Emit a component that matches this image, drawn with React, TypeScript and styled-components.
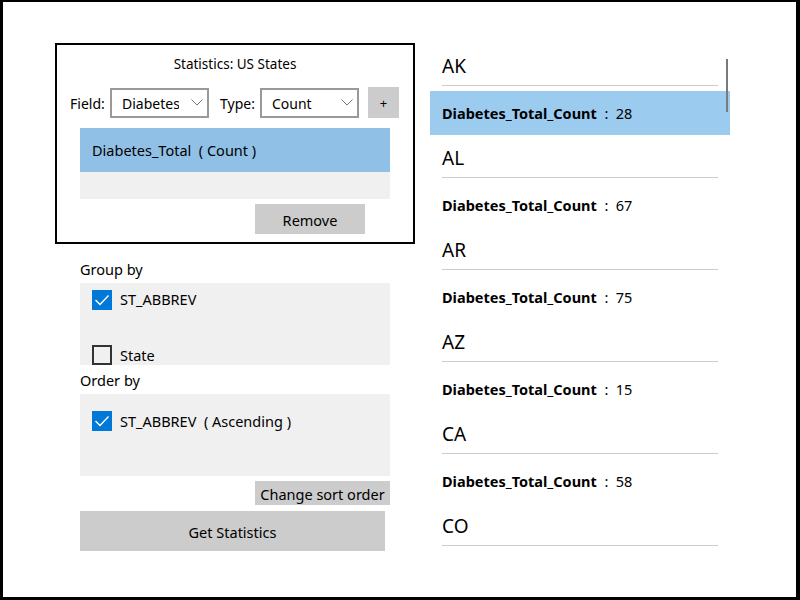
import React from "react";
import styled, { createGlobalStyle } from "styled-components";

const GlobalStyle = createGlobalStyle`
  html, body {
    margin: 0;
    padding: 0;
    background: #fff;
  }
  body {
    font-family: "Noto Sans", "Open Sans", sans-serif;
    color: #000;
  }
`;

const Frame = styled.div`
  width: 800px;
  height: 600px;
  box-sizing: border-box;
  border-style: solid;
  border-color: #000;
  border-width: 2px 4px 3px 3px;
  display: flex;
  padding: 41px 0 0 52px;
  overflow: hidden;
`;

const LeftColumn = styled.div`
  width: 360px;
  display: flex;
  flex-direction: column;
`;

const StatsBox = styled.div`
  box-sizing: border-box;
  width: 360px;
  height: 201px;
  border: 2px solid #000;
  display: flex;
  flex-direction: column;
`;

const Title = styled.div`
  margin-top: 9px;
  height: 20px;
  line-height: 20px;
  text-align: center;
  font-size: 13.5px;
`;

const FieldRow = styled.div`
  margin-top: 13px;
  padding-left: 13px;
  display: flex;
  align-items: center;
  height: 31px;
`;

const FieldLabel = styled.span`
  width: 40px;
  font-size: 14px;
  padding-top: 2px;
`;

const Select = styled.div`
  box-sizing: border-box;
  width: 99px;
  height: 30px;
  border: 2px solid #999;
  display: flex;
  align-items: center;
  padding: 2px 0 0 10px;
  margin-right: 11px;
  font-size: 14px;
`;

const SelectText = styled.span`
  width: 57px;
  overflow: hidden;
  white-space: nowrap;
`;

const Chevron = styled.svg`
  margin: -2px 0 0 12px;
`;

const PlusButton = styled.div`
  width: 31px;
  height: 31px;
  margin-left: -2px;
  background: #ccc;
  display: flex;
  align-items: center;
  justify-content: center;
  font-size: 13px;
`;

const StatList = styled.div`
  margin: 10px 0 0 23px;
  width: 310px;
  height: 71px;
  background: #f0f0f0;
`;

const StatItem = styled.div`
  height: 44px;
  background: #91c0e7;
  display: flex;
  align-items: center;
  padding-left: 12px;
  font-size: 14.5px;
  white-space: pre;
`;

const GrayButton = styled.div<{ w: number; h: number }>`
  width: ${(p) => p.w}px;
  height: ${(p) => p.h}px;
  background: #ccc;
  display: flex;
  align-items: center;
  justify-content: center;
  padding-top: 1px;
  box-sizing: border-box;
  font-size: 14.5px;
`;

const RemoveWrap = styled.div`
  margin: 5px 0 0 198px;
`;

const LowerSection = styled.div`
  margin-left: 25px;
  width: 310px;
  display: flex;
  flex-direction: column;
`;

const SectionLabel = styled.div<{ top: number }>`
  margin-top: ${(p) => p.top}px;
  height: 20px;
  line-height: 20px;
  font-size: 14.5px;
`;

const CheckPanel = styled.div<{ h: number; pad: number }>`
  margin-top: 4px;
  height: ${(p) => p.h}px;
  padding-top: ${(p) => p.pad}px;
  box-sizing: border-box;
  background: #f0f0f0;
  overflow: hidden;
`;

const CheckRow = styled.div`
  height: 55px;
  padding-left: 12px;
  display: flex;
  align-items: flex-start;
  font-size: 14.5px;
  white-space: pre;
`;

const Box = styled.div<{ checked: boolean }>`
  box-sizing: border-box;
  width: 20px;
  height: 20px;
  flex-shrink: 0;
  margin-right: 8px;
  background: ${(p) => (p.checked ? "#0078d7" : "transparent")};
  border: ${(p) => (p.checked ? "none" : "2px solid #333")};
  display: flex;
  align-items: center;
  justify-content: center;
`;

const CheckText = styled.span<{ shift: number }>`
  line-height: 20px;
  margin-top: ${(p) => p.shift}px;
`;

const SortWrap = styled.div`
  margin: 5px 0 0 175px;
`;

const GetWrap = styled.div`
  margin-top: 6px;
`;

const RightColumn = styled.div`
  position: relative;
  margin: 2px 0 0 15px;
  width: 300px;
  height: 506px;
  overflow: hidden;
`;

const HeaderItem = styled.div`
  height: 46px;
  padding: 0 12px;
`;

const HeaderText = styled.div`
  height: 41px;
  box-sizing: border-box;
  border-bottom: 1px solid #ccc;
  padding-top: 8px;
  line-height: 26px;
  font-size: 19px;
`;

const DataItem = styled.div<{ selected?: boolean }>`
  height: 44px;
  margin-bottom: 2px;
  padding-left: 12px;
  display: flex;
  align-items: center;
  background: ${(p) => (p.selected ? "#9ccbf0" : "transparent")};
  font-size: 14.5px;
  white-space: pre;
`;

const Bold = styled.span`
  font-weight: 700;
`;

const ScrollThumb = styled.div`
  position: absolute;
  left: 296px;
  top: 14px;
  width: 2px;
  height: 53px;
  background: #7a7a7a;
`;

const results: { state: string; count?: number }[] = [
  { state: "AK", count: 28 },
  { state: "AL", count: 67 },
  { state: "AR", count: 75 },
  { state: "AZ", count: 15 },
  { state: "CA", count: 58 },
  { state: "CO" },
];

const ChevronIcon = () => (
  <Chevron width="12" height="7" viewBox="0 0 12 7">
    <polyline points="0.5,0.5 6,6 11.5,0.5" fill="none" stroke="#777" strokeWidth="1" />
  </Chevron>
);

const CheckBox: React.FC<{ checked: boolean }> = ({ checked }) => (
  <Box checked={checked}>
    {checked && (
      <svg width="20" height="20" viewBox="0 0 20 20">
        <polyline points="3.5,10 8,14.5 16.5,5.5" fill="none" stroke="#fff" strokeWidth="1.4" />
      </svg>
    )}
  </Box>
);

export default function App() {
  return (
    <>
      <GlobalStyle />
      <Frame>
        <LeftColumn>
          <StatsBox>
            <Title>Statistics: US States</Title>
            <FieldRow>
              <FieldLabel>Field:</FieldLabel>
              <Select>
                <SelectText>Diabetes</SelectText>
                <ChevronIcon />
              </Select>
              <FieldLabel>Type:</FieldLabel>
              <Select>
                <SelectText>Count</SelectText>
                <ChevronIcon />
              </Select>
              <PlusButton>+</PlusButton>
            </FieldRow>
            <StatList>
              <StatItem>Diabetes_Total  ( Count )</StatItem>
            </StatList>
            <RemoveWrap>
              <GrayButton w={110} h={30}>Remove</GrayButton>
            </RemoveWrap>
          </StatsBox>
          <LowerSection>
            <SectionLabel top={15}>Group by</SectionLabel>
            <CheckPanel h={82} pad={7}>
              <CheckRow>
                <CheckBox checked />
                <CheckText shift={-1}>ST_ABBREV</CheckText>
              </CheckRow>
              <CheckRow>
                <CheckBox checked={false} />
                <CheckText shift={0}>State</CheckText>
              </CheckRow>
            </CheckPanel>
            <SectionLabel top={5}>Order by</SectionLabel>
            <CheckPanel h={82} pad={17}>
              <CheckRow>
                <CheckBox checked />
                <CheckText shift={0}>ST_ABBREV  ( Ascending )</CheckText>
              </CheckRow>
            </CheckPanel>
            <SortWrap>
              <GrayButton w={135} h={24}>Change sort order</GrayButton>
            </SortWrap>
            <GetWrap>
              <GrayButton w={305} h={40}>Get Statistics</GrayButton>
            </GetWrap>
          </LowerSection>
        </LeftColumn>
        <RightColumn>
          {results.map((r, i) => (
            <React.Fragment key={r.state}>
              <HeaderItem>
                <HeaderText>{r.state}</HeaderText>
              </HeaderItem>
              {r.count !== undefined && (
                <DataItem selected={i === 0}>
                  <Bold>Diabetes_Total_Count</Bold>
                  {"  :  "}
                  {r.count}
                </DataItem>
              )}
            </React.Fragment>
          ))}
          <ScrollThumb />
        </RightColumn>
      </Frame>
    </>
  );
}
